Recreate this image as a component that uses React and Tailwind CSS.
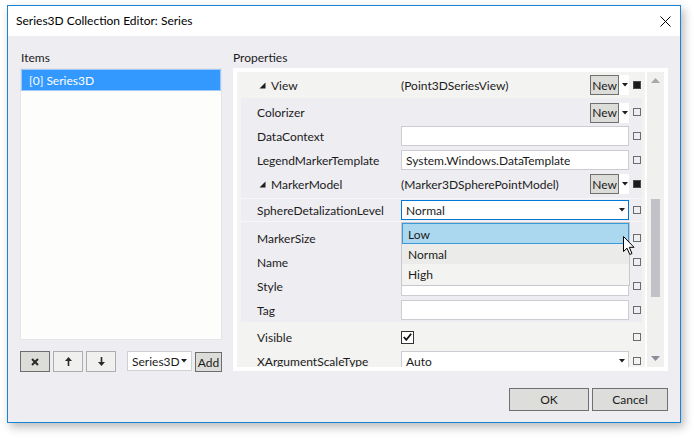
import React from "react";

function DropArrow({ color = "#1e1e1e" }) {
  return (
    <svg width="6" height="4" viewBox="0 0 6 4" className="shrink-0">
      <polygon points="0,0 6,0 3,3.5" fill={color} />
    </svg>
  );
}

function Expander() {
  return (
    <svg width="7" height="7" viewBox="0 0 7 7" className="shrink-0">
      <polygon points="6.5,0.5 6.5,6.5 0.5,6.5" fill="#1e1e1e" />
    </svg>
  );
}

function Square({ filled }) {
  return filled ? (
    <div className="w-[8px] h-[8px] ml-[4px] shrink-0 border border-[#4a4a4a] bg-[#1a1a1a]" />
  ) : (
    <div className="w-[8px] h-[8px] ml-[4px] shrink-0 border border-[#6d6d6d]" />
  );
}

function NewBox() {
  return (
    <div className="flex items-center h-[20px] w-[39px] bg-white shrink-0">
      <div className="w-[29px] h-[20px] border border-[#707070] bg-[#dcdcd8] flex items-center justify-center leading-none pt-[1px]">
        New
      </div>
      <div className="ml-[3px]">
        <DropArrow />
      </div>
    </div>
  );
}

function Input({ text = "", combo = false, focused = false }) {
  return (
    <div
      className={`h-[20px] w-full bg-white border flex items-center pl-[4px] pr-[3px] ${
        focused ? "border-[#0078d7]" : "border-[#cccdd3]"
      }`}
    >
      <span className="flex-1 leading-none pt-[2px]">{text}</span>
      {combo && <DropArrow />}
    </div>
  );
}

function Row({ grouped, expander, label, children, filled, className = "" }) {
  const labelCls = grouped
    ? expander
      ? "w-[160px] pl-[18px]"
      : "w-[160px] pl-[16px]"
    : expander
    ? "w-[164px] pl-[22px]"
    : "w-[164px] pl-[20px]";
  return (
    <div className={`flex items-center shrink-0 ${className}`}>
      <div className={`${labelCls} flex items-center gap-[5px] shrink-0 whitespace-nowrap`}>
        {expander && <Expander />}
        <span className="pt-[2px]">{label}</span>
      </div>
      <div className="w-[228px] flex items-center shrink-0">{children}</div>
      <Square filled={filled} />
    </div>
  );
}

function Cursor() {
  return (
    <svg width="13" height="20" viewBox="0 0 13 20">
      <polygon
        points="0.5,0.5 0.5,15.5 4,12.2 6.8,18.5 9,17.5 6.3,11.3 11,11.3"
        fill="#ffffff"
        stroke="#000000"
        strokeWidth="1"
        strokeLinejoin="miter"
      />
    </svg>
  );
}

export default function App() {
  return (
    <div className="w-[694px] h-[438px] bg-white overflow-hidden font-[Lato,'Noto_Sans',sans-serif] text-[12px] text-[#1b1b1b]">
      <div className="ml-[7px] mt-[5px] w-[674px] h-[418px] border border-[#1883d7] bg-[#eeedf2] flex flex-col shadow-[3px_4px_9px_rgba(0,0,0,0.28)]">
        {/* Title bar */}
        <div className="h-[30px] bg-white flex items-center justify-between pl-[8px] pr-[9px] shrink-0">
          <span className="text-[12px] text-black">Series3D Collection Editor: Series</span>
          <svg width="11" height="11" viewBox="0 0 11 11">
            <line x1="0.5" y1="0.5" x2="10.5" y2="10.5" stroke="#000" strokeWidth="1" />
            <line x1="10.5" y1="0.5" x2="0.5" y2="10.5" stroke="#000" strokeWidth="1" />
          </svg>
        </div>

        {/* Body */}
        <div className="flex flex-col pl-[12px] pr-[12px] pt-[12px]">
          <div className="flex gap-[11px]">
            {/* Left column */}
            <div className="w-[202px] flex flex-col shrink-0">
              <div className="h-[17px] leading-[17px] pl-[1px] mb-[3px] pt-[1px]">Items</div>
              <div className="h-[272px] bg-[#fdfdfc] border border-[#e4e4e8]">
                <div className="h-[22px] bg-[#3399ff] border border-[#9fcaf7] text-white flex items-center pl-[7px] pt-[1px]">
                  [0] Series3D
                </div>
              </div>
              <div className="flex items-end mt-[11px] h-[21px]">
                <div className="w-[30px] h-[21px] border border-[#6d6d6d] bg-[#dcdcd8] flex items-center justify-center">
                  <svg width="8" height="8" viewBox="0 0 8 8">
                    <line x1="1" y1="1" x2="7" y2="7" stroke="#2a2a2a" strokeWidth="2" />
                    <line x1="7" y1="1" x2="1" y2="7" stroke="#2a2a2a" strokeWidth="2" />
                  </svg>
                </div>
                <div className="ml-[3px] w-[30px] h-[21px] border border-[#adadad] bg-[#f0f0ee] flex items-center justify-center">
                  <svg width="7" height="9" viewBox="0 0 7 9">
                    <polygon points="3.5,0 7,4 4.3,4 4.3,9 2.7,9 2.7,4 0,4" fill="#2a2a2a" />
                  </svg>
                </div>
                <div className="ml-[3px] w-[30px] h-[21px] border border-[#adadad] bg-[#f0f0ee] flex items-center justify-center">
                  <svg width="7" height="9" viewBox="0 0 7 9">
                    <polygon points="3.5,9 7,5 4.3,5 4.3,0 2.7,0 2.7,5 0,5" fill="#2a2a2a" />
                  </svg>
                </div>
                <div className="ml-[11px] w-[65px] h-[20px] mb-[1px] bg-white border border-[#d0d0d4] flex items-center pl-[4px] pr-[4px]">
                  <span className="flex-1 leading-none pt-[2px]">Series3D</span>
                  <DropArrow />
                </div>
                <div className="ml-[3px] w-[27px] h-[20px] border border-[#6d6d6d] bg-[#dcdcd8] flex items-center justify-center leading-none pt-[2px]">
                  Add
                </div>
              </div>
            </div>

            {/* Right column */}
            <div className="w-[435px] flex flex-col shrink-0">
              <div className="h-[17px] leading-[17px] mb-[3px] pt-[1px]">Properties</div>
              <div className="h-[303px] bg-white p-[4px] flex">
                {/* Rows area */}
                <div className="relative w-[408px] h-[295px] overflow-hidden bg-[#f3f3f1] flex flex-col">
                  <Row expander label="View" filled className="h-[26px]">
                    <div className="flex items-center justify-between w-full">
                      <span className="pt-[2px]">(Point3DSeriesView)</span>
                      <NewBox />
                    </div>
                  </Row>

                  <div className="ml-[4px] mr-[3px] bg-[#eeedf2] pt-[2px] flex flex-col">
                    <Row grouped label="Colorizer" className="h-[24px]">
                      <div className="flex justify-end w-full pt-[1px]">
                        <NewBox />
                      </div>
                    </Row>
                    <Row grouped label="DataContext" className="h-[24px]">
                      <Input />
                    </Row>
                    <Row grouped label="LegendMarkerTemplate" className="h-[24px]">
                      <Input text="System.Windows.DataTemplate" />
                    </Row>
                    <Row grouped expander label="MarkerModel" filled className="h-[24px]">
                      <div className="flex items-center justify-between w-full">
                        <span className="pt-[2px]">(Marker3DSpherePointModel)</span>
                        <NewBox />
                      </div>
                    </Row>
                    <div className="h-[2px]" />
                    <Row grouped label="SphereDetalizationLevel" className="h-[24px] border-y border-[#f7f7f9]">
                      <Input text="Normal" combo focused />
                    </Row>
                    <div className="h-[4px]" />
                    <Row grouped label="MarkerSize" className="h-[24px]">
                      <Input />
                    </Row>
                    <Row grouped label="Name" className="h-[24px]">
                      <Input />
                    </Row>
                    <Row grouped label="Style" className="h-[24px]">
                      <Input />
                    </Row>
                    <Row grouped label="Tag" className="h-[24px]">
                      <Input />
                    </Row>
                  </div>

                  <div className="h-[3px] shrink-0" />
                  <Row label="Visible" className="h-[24px]">
                    <div className="w-[13px] h-[13px] border border-[#333] bg-white flex items-center justify-center">
                      <svg width="9" height="8" viewBox="0 0 9 8">
                        <polyline points="0.8,4 3.3,6.8 8.2,0.8" fill="none" stroke="#111" strokeWidth="1.8" />
                      </svg>
                    </div>
                  </Row>
                  <Row label="XArgumentScaleType" className="h-[24px]">
                    <Input text="Auto" combo />
                  </Row>

                  {/* Dropdown popup */}
                  <div className="absolute left-[164px] top-[150px] w-[229px] h-[64px] bg-[#f3f3f1] border border-[#c8c8cc] flex flex-col">
                    <div className="h-[21px] bg-[#acd8ef] border border-[#3a9ad9] flex items-center pl-[5px] pt-[2px]">Low</div>
                    <div className="h-[20px] bg-[#ebebe9] flex items-center pl-[6px] pt-[2px]">Normal</div>
                    <div className="h-[20px] flex items-center pl-[6px] pt-[2px]">High</div>
                  </div>

                  {/* Mouse cursor */}
                  <div className="absolute left-[386px] top-[164px]">
                    <Cursor />
                  </div>
                </div>

                {/* Scrollbar */}
                <div className="ml-[2px] w-[17px] h-[295px] bg-[#f0f0ee] flex flex-col">
                  <div className="h-[17px] flex items-center justify-center">
                    <svg width="9" height="5" viewBox="0 0 9 5">
                      <polygon points="0,5 9,5 4.5,0" fill="#a8a8a8" />
                    </svg>
                  </div>
                  <div className="mt-[110px] ml-[4px] w-[9px] h-[98px] bg-[#c2c1c6]" />
                  <div className="flex-1" />
                  <div className="h-[17px] flex items-center justify-center">
                    <svg width="9" height="5" viewBox="0 0 9 5">
                      <polygon points="0,0 9,0 4.5,5" fill="#8c8c9a" />
                    </svg>
                  </div>
                </div>
              </div>
            </div>
          </div>

          {/* Footer */}
          <div className="flex justify-end gap-[3px] mt-[16px]">
            <div className="w-[80px] h-[23px] border border-[#707070] bg-[#dddddb] flex items-center justify-center pt-[1px]">OK</div>
            <div className="w-[76px] h-[23px] border border-[#707070] bg-[#dddddb] flex items-center justify-center pt-[1px]">Cancel</div>
          </div>
        </div>
      </div>
    </div>
  );
}
